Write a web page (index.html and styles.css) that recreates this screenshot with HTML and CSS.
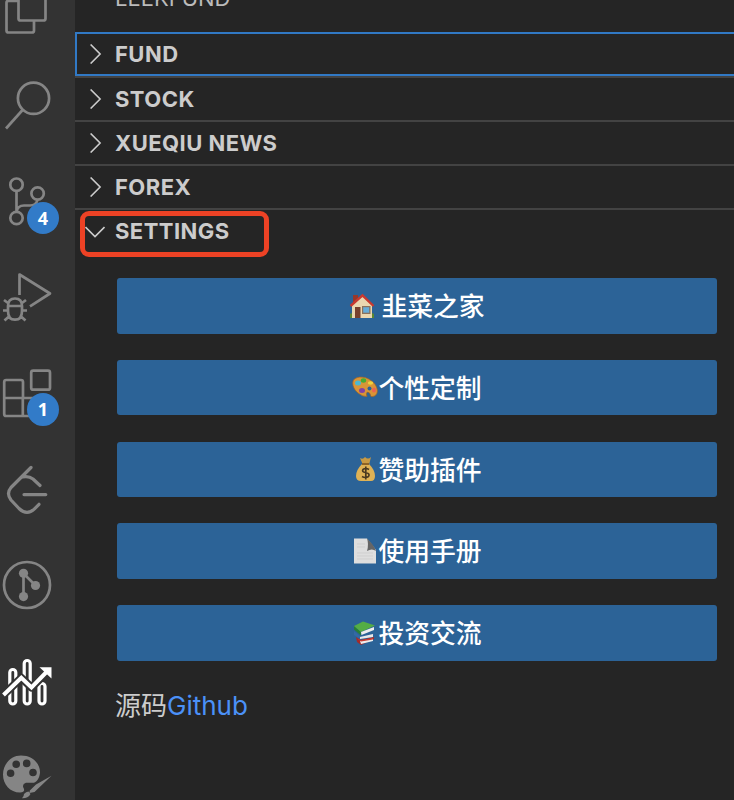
FILE: index.html
```
<!DOCTYPE html>
<html lang="zh-CN">
<head>
<meta charset="utf-8">
<title>LeekFund</title>
<link rel="stylesheet" href="styles.css">
</head>
<body>
<div class="app">
  <nav class="activity">
    <div class="item"><svg viewBox="0 -39 75 96"><path d="M18 .8H8.500Q6.500.8 6.500 2.800V30.500Q6.500 32.500 8.500 32.500H32Q34 32.500 34 30.500V21M18.500-16V18.500Q18.500 20.500 20.500 20.500H43.500Q45.500 20.500 45.500 18.500V-10L39-16Z"/></svg></div>
    <div class="item"><svg viewBox="0 57 75 96"><circle cx="33.500" cy="98.300" r="15.600"/><path d="M23 109.500L6 128.500"/></svg></div>
    <div class="item"><svg viewBox="0 153 75 96"><circle cx="16.500" cy="184.700" r="6.200"/><circle cx="37.600" cy="193.500" r="6.200"/><circle cx="16.500" cy="218" r="6.200"/><path d="M16.500 191V212M37.500 200Q36 205.500 30 205.500H24Q17.500 205.500 16.500 212"/></svg><span class="badge">4</span></div>
    <div class="item"><svg viewBox="0 249 75 96"><path d="M19.500 295V274.500L50 293.500L30 306.300"/><path d="M8 306H22M8 306V311Q8 319.700 15 319.700T22 311V306Q22 298.500 15 298.500T8 306M8 303L4 300M22 303L26 300M8 310.500H3M22 310.500H27M9.500 316L4.500 320.500M20.500 316L25.500 320.500"/></svg></div>
    <div class="item"><svg viewBox="0 345 75 96"><rect x="31.200" y="370.700" width="18.800" height="19" rx="2"/><path d="M23 398V382Q23 380 21 380H6.200Q4.200 380 4.200 382V414Q4.200 416 6.200 416H40V398H4.200M22.800 398V416"/></svg><span class="badge badge-low">1</span></div>
    <div class="item"><svg class="heavy" viewBox="0 441 75 96"><path d="M31 467.500L11 487.500Q6 493.500 11 500L19 508.500Q27 516 34.500 508.800L39 504.300M22.500 477Q28.500 475.500 33 479L40 485.500M24 494.600H45.800"/></svg></div>
    <div class="item"><svg viewBox="0 537 75 96"><circle cx="27" cy="585" r="23"/><path d="M23.500 596.500V573.500L35.500 585.500"/><g class="solid"><circle cx="23.500" cy="573.300" r="4.600"/><circle cx="23.500" cy="596.600" r="4.600"/><circle cx="35.500" cy="585.500" r="4.600"/></g></svg></div>
    <div class="item active"><svg class="heavy" viewBox="0 633 75 96"><rect x="9.800" y="669.500" width="6" height="34.500" rx="3"/><rect x="24.200" y="660.500" width="6" height="43.500" rx="3"/><rect x="39" y="683.500" width="6" height="20.500" rx="3"/><path class="halo" d="M1 697L21.300 677.800L31.500 687.500L46 673"/><path class="trend" d="M3.500 695L21.300 677.800L31.500 687.500L47 671.500"/><path class="solid" d="M39.500 667.300H51.500V678.500Z"/></svg></div>
    <div class="item"><svg viewBox="0 729 75 96"><path class="solid" fill-rule="evenodd" d="M21 755.500C32 755.500 40 763 40 772C40 776 38 781 34 782.800H26Q22 784 23.300 787.500Q26 792 20 792.500C10 792.500 3 784.500 3 774.500C3 764 11 755.500 21 755.500ZM14.400 773.200a3.800 3.800 0 1 0-7.600 0a3.800 3.800 0 1 0 7.600 0M20 764.300a3.800 3.800 0 1 0-7.600 0a3.800 3.800 0 1 0 7.600 0M30.500 763.400a3.800 3.800 0 1 0-7.600 0a3.800 3.800 0 1 0 7.600 0M36.800 772.500a3.800 3.800 0 1 0-7.600 0a3.800 3.800 0 1 0 7.600 0"/><path class="solid" d="M51.500 775.700L34.500 792L29.500 793L29.800 790.500L36 784.500ZM28.500 791.500L30.500 794Q28 798.500 22 798.300Q24 796.500 24 794Q26 791.500 28.500 791.500Z"/></svg></div>
  </nav>
  <main class="sidebar">
    <h1 class="title">LEEKFUND</h1>
    <section class="row focused"><svg class="chevron" viewBox="0 0 20 20"><path d="M5.600.5L15.100 10L5.600 19.500"/></svg><span>FUND</span></section>
    <section class="row"><svg class="chevron" viewBox="0 0 20 20"><path d="M5.600.5L15.100 10L5.600 19.500"/></svg><span>STOCK</span></section>
    <section class="row"><svg class="chevron" viewBox="0 0 20 20"><path d="M5.600.5L15.100 10L5.600 19.500"/></svg><span>XUEQIU NEWS</span></section>
    <section class="row"><svg class="chevron" viewBox="0 0 20 20"><path d="M5.600.5L15.100 10L5.600 19.500"/></svg><span>FOREX</span></section>
    <section class="row settings"><svg class="chevron" viewBox="0 0 20 20"><path d="M.5 6L10 15.500L19.500 6"/></svg><span>SETTINGS</span><i class="mark"></i></section>
    <div class="buttons">
      <button><svg class="emoji gap" viewBox="0 0 26 26"><path fill="#5b8732" d="M1 21q4-3 8 0h8q4-3 8 0v4H1z"/><path fill="#98382b" d="M4 2h5v9H4z"/><path fill="#ead7b0" d="M3 12L14 3L23 12V25H3z"/><path fill="none" stroke="#c8392f" stroke-width="2.400" d="M1.500 13L13.500 2.300L24.500 13"/><path fill="#78412d" d="M6 14h5.500v11H6z"/><path fill="#8b725b" d="M13 13h8.500v8H13z"/><path fill="#66acd8" d="M14.200 14.200h6v5.500h-6z"/></svg><span>韭菜之家</span></button>
      <button><svg class="emoji" viewBox="0 0 26 26"><path fill="#d99537" stroke="#a56424" stroke-width=".7" d="M2.500 4C9-.5 19 3.500 23.500 10C27.500 17 24.500 22 19 21.500Q18 17 15.500 17Q13.500 18 15 21.500Q11 22 6 18C1 14-1 7 2.500 4z"/><circle cx="17.500" cy="13.500" r="2" fill="#2c6397"/><ellipse cx="6" cy="8" rx="3" ry="2.500" fill="#4bb8d2"/><ellipse cx="11.500" cy="5.500" rx="2.700" ry="2.200" fill="#45ad35"/><ellipse cx="18.500" cy="8" rx="2.700" ry="1.800" fill="#edd33c"/><ellipse cx="10" cy="15.500" rx="3" ry="2.500" fill="#8241a5"/><ellipse cx="22" cy="15" rx="2" ry="2.500" fill="#ed6252"/></svg><span>个性定制</span></button>
      <button><svg class="emoji" viewBox="0 0 26 26"><path fill="#c99a43" d="M8 2q3 2 5-1q3 3 6 0l-2 8h-6z"/><path fill="#dfb255" d="M10 8h7q6 6 6 12q0 5-4 5H9q-5 0-5-5q0-6 6-12z"/><path fill="none" stroke="#8e6326" stroke-width="2" d="M10 8h7"/><path fill="none" stroke="#4a3920" stroke-width="1.700" d="M17 13.500q-3.500-2-6 0q-1.500 2.500 2.500 3q5 1 3 4q-3 2-6.500 0M13.800 10.500v13"/></svg><span>赞助插件</span></button>
      <button><svg class="emoji" viewBox="0 0 26 26"><path fill="#dedede" d="M2 .5H15L24 12V25.500H2z"/><path fill="#666" d="M15 .5Q17 6 15 13Q20 10 24 13Q22 7 15 .5z"/><path stroke="#cfcfcf" d="M5 6h8M5 9h8M5 15h16M5 18h16M5 21h16"/></svg><span>使用手册</span></button>
      <button><svg class="emoji" viewBox="0 0 26 26"><path fill="#a32b2b" d="M4 17L9 20L22 17V19L9 25L5 22z"/><path fill="#eee" d="M8 21L21 18.500V21L9 24z"/><path fill="#3469a6" d="M2 11L8 16L22 14L20 17L8 19L2 15z"/><path fill="#e9e9e9" d="M8 17L21 14V17L8 19z"/><path fill="#c83b32" d="M5 18.500L9 20L21 18V19.500L9 21.500z"/><path fill="#287e36" d="M2 6L9 12V15.500L2 9.500z"/><path fill="#54ad45" d="M2 6L11 1.500L23 5.500L9 12z"/><path fill="#eee" d="M9 12L22 7V10L9.500 15z"/></svg><span>投资交流</span></button>
    </div>
    <p class="source">源码<a>Github</a></p>
  </main>
</div>
</body>
</html>
```
FILE: styles.css
```
* { box-sizing: border-box; }
body { margin: 0; background: #252525; font-family: Inter, "Noto Sans CJK SC", sans-serif; }
.app { display: flex; width: 734px; height: 800px; overflow: hidden; }
.activity { width: 75px; flex: none; background: #333; margin-top: -39px; height: 864px; }
.item { position: relative; width: 75px; height: 96px; color: #858585; }
.item svg { display: block; width: 75px; height: 96px; fill: none; stroke: currentColor; stroke-width: 2.7; stroke-linejoin: round; }
.item .heavy { stroke-width: 3.2; stroke-linecap: round; }
.item .solid { fill: currentColor; stroke: none; }
.item .halo { stroke: #333; stroke-width: 8; }
.item .trend { stroke-width: 4; stroke-linecap: butt; stroke-linejoin: miter; }
.active { color: #fff; }
.badge { position: absolute; left: 27px; top: 49px; width: 32px; height: 32px; border-radius: 50%; background: #327bc8; color: #fff; font: 700 18px/32px "Open Sans", sans-serif; text-align: center; }
.badge-low { top: 48px; height: 33px; }
.sidebar { flex: 1; min-width: 0; color: #ccc; }
.title { height: 32px; margin: -16px 0 16px; padding-left: 40px; font-size: 22px; font-weight: 400; line-height: 28px; color: #bbb; }
.row { position: relative; display: flex; align-items: center; height: 44px; padding-left: 10px; font-size: 22px; font-weight: 700; letter-spacing: .45px; border-top: 2px solid #434343; }
.row.focused { border: 2px solid #3179c5; border-right: 0; padding-left: 8px; }
.row.settings { padding-bottom: 1px; }
.chevron { width: 20px; height: 20px; margin-right: 10px; fill: none; stroke: #ccc; stroke-width: 1.6; }
.mark { position: absolute; left: 5px; top: 1px; width: 189px; height: 46px; border: 5px solid #ed4225; border-radius: 9px; }
.buttons { display: flex; flex-direction: column; gap: 26.2px; margin: 26px 17px 0 42px; }
button { display: flex; align-items: center; justify-content: center; height: 55.6px; padding: 0; border: 0; border-radius: 3px; background: #2c6397; color: #fff; font: 500 25.8px/38px "Noto Sans CJK SC", sans-serif; }
button span { padding-bottom: 1.5px; }
.emoji { width: 26px; height: 26px; }
.gap { margin-right: 6px; }
.source { margin: 26px 0 0 40px; font-size: 26px; line-height: 38px; }
.source a { color: #4b91f7; }
```
